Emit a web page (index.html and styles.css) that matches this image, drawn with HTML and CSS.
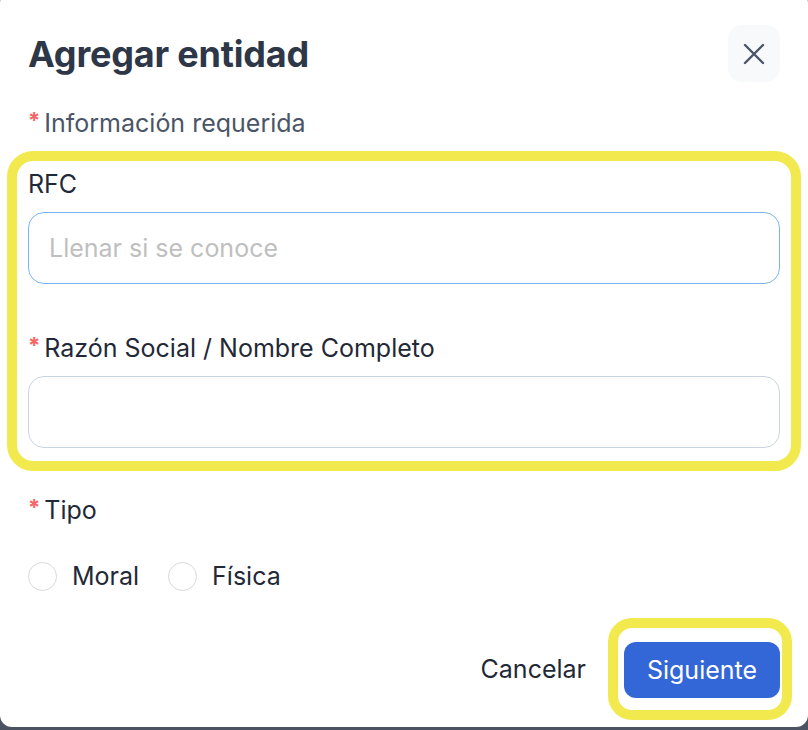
FILE: index.html
```html
<!doctype html>
<html>
<head>
    <meta charset="utf-8">
    <title>Agregar entidad</title>
    <link rel="stylesheet" href="styles.css">
</head>

<body>
    <div class="modal">
        <div class="header">
            <h1>Agregar entidad</h1>
            <button class="close" type="button" aria-label="Cerrar">
                <svg width="22" height="22" viewBox="0 0 22 22">
                    <path d="M2 2 L20 20 M20 2 L2 20" stroke="#4a5568" stroke-width="2.4" stroke-linecap="round" fill="none"/>
                </svg>
            </button>
        </div>

        <div class="note"><span class="req">*</span>Información requerida</div>

        <div class="mark box">
            <label class="label first" for="rfc">RFC</label>
            <input id="rfc" class="field focus" type="text" placeholder="Llenar si se conoce" />

            <label class="label second" for="nombre"><span class="req">*</span>Razón Social / Nombre Completo</label>
            <input id="nombre" class="field" type="text" />
        </div>

        <div class="label tipo"><span class="req">*</span>Tipo</div>

        <div class="radios">
            <label class="radio"><input type="radio" name="tipo" value="moral" /> Moral</label>
            <label class="radio"><input type="radio" name="tipo" value="fisica" /> Física</label>
        </div>

        <div class="footer">
            <button class="cancel" type="button">Cancelar</button>
            <div class="mark btnmark">
                <button class="next" type="button">Siguiente</button>
            </div>
        </div>
    </div>
</body>
</html>
```

FILE: styles.css
```css
* {
  box-sizing: border-box;
}

html, body {
  margin: 0;
  height: 730px;
  overflow: hidden;
  background-color: #4b5363;
  font-family: Inter, "Noto Sans", sans-serif;
}

.modal {
  width: 808px;
  height: 736px;
  margin-top: -9px;
  padding: 34px 28px 0 28px;
  background-color: #ffffff;
  border-radius: 12px;
}

.header {
  display: flex;
  justify-content: space-between;
  align-items: center;
}

.header h1 {
  margin: 0;
  font-size: 36px;
  font-weight: 700;
  color: #2d3748;
  letter-spacing: -0.2px;
}

.close {
  width: 52px;
  height: 57px;
  border: none;
  border-radius: 14px;
  background-color: #f8f9fa;
  display: flex;
  align-items: center;
  justify-content: center;
  padding: 0;
}

.req {
  color: #f56565;
  font-size: 22px;
  font-weight: 700;
  margin-right: 4px;
  vertical-align: 4px;
}

.note {
  margin-top: 22px;
  font-size: 25px;
  line-height: 32px;
  color: #4a5568;
}

.mark {
  border: 10px solid #f2e94e;
  border-radius: 26px;
}

.box {
  margin: 12px -21px 0 -21px;
  padding: 7px 11px 13px 11px;
}

.label {
  display: block;
  font-size: 25px;
  line-height: 32px;
  color: #1f2937;
}

.label.second {
  margin-top: 45px;
}

.field {
  display: block;
  width: 100%;
  height: 72px;
  margin-top: 12px;
  padding: 0 20px;
  border: 1px solid #cbd5e0;
  border-radius: 16px;
  font-family: inherit;
  font-size: 25px;
  color: #1f2937;
  outline: none;
}

.field.focus {
  border-color: #78b4f4;
}

.field::placeholder {
  color: #bfbfbf;
}

.tipo {
  margin-top: 20px;
}

.radios {
  display: flex;
  gap: 29px;
  margin-top: 34px;
}

.radio {
  display: flex;
  align-items: center;
  gap: 15px;
  font-size: 25px;
  line-height: 32px;
  color: #1f2937;
}

.radio input {
  appearance: none;
  margin: 0;
  width: 29px;
  height: 29px;
  border: 1px solid #d9d9d9;
  border-radius: 50%;
  background: #ffffff;
}

.footer {
  display: flex;
  justify-content: flex-end;
  align-items: center;
  gap: 22px;
  margin-top: 26px;
  margin-right: -12px;
}

.cancel {
  border: none;
  background: none;
  padding: 0;
  font-family: inherit;
  font-size: 25px;
  color: #1f2937;
}

.btnmark {
  padding: 14px 2px 12px 6px;
  border-radius: 24px;
}

.next {
  width: 156px;
  height: 56px;
  border: none;
  border-radius: 12px;
  background-color: #3366d6;
  color: #ffffff;
  font-family: inherit;
  font-size: 25px;
}
```
